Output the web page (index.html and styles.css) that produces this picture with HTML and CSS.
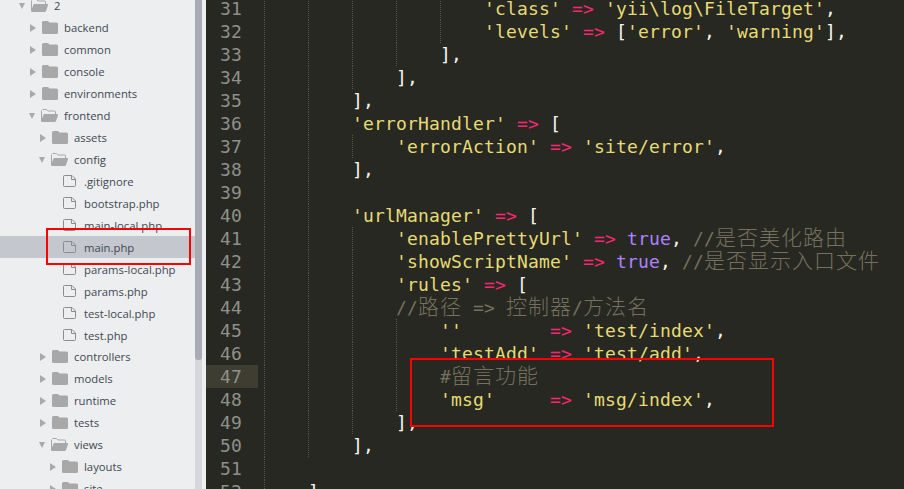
FILE: index.html
```html
<!DOCTYPE html>
<html lang="zh">
<head>
<meta charset="utf-8">
<title>main.php</title>
<link rel="stylesheet" href="styles.css">
</head>
<body>
<svg class="defs" width="0" height="0" aria-hidden="true">
  <symbol id="closed" viewBox="0 0 16 13"><path d="M1.500 0H6l1.500 1.500h7A1.500 1.500 0 0 1 16 3v8.500A1.500 1.500 0 0 1 14.500 13h-13A1.500 1.500 0 0 1 0 11.500v-10A1.500 1.500 0 0 1 1.500 0z" fill="#a8a8a8"/></symbol>
  <symbol id="open" viewBox="0 0 17 13"><path d="M1.500.5H5.500L7 2h6.500a1 1 0 0 1 1 1v2" fill="none" stroke="#a8a8a8"/><path d="M.5 12V1.500" stroke="#a8a8a8" fill="none"/><path d="M3.500 5H16a1 1 0 0 1 1 1.300l-2 5.700a1.500 1.500 0 0 1-1.400 1H1.200a1 1 0 0 1-.9-1.400l2-5.500A1.500 1.500 0 0 1 3.500 5z" fill="#a8a8a8"/></symbol>
  <symbol id="file" viewBox="0 0 13 12"><path d="M.5 1.500a1 1 0 0 1 1-1H9L12.500 4v6.500a1 1 0 0 1-1 1h-10a1 1 0 0 1-1-1z" fill="none" stroke="#8c8c8c"/><path d="M8.500.5V4.500H12.500" fill="none" stroke="#8c8c8c"/></symbol>
</svg>
<div class="window">
  <aside class="sidebar">
    <ul class="tree">
      <li class="node d0"><i class="arrow down"></i><svg class="ico open"><use href="#open"/></svg><span>2</span></li>
      <li class="node d1"><i class="arrow"></i><svg class="ico folder"><use href="#closed"/></svg><span>backend</span></li>
      <li class="node d1"><i class="arrow"></i><svg class="ico folder"><use href="#closed"/></svg><span>common</span></li>
      <li class="node d1"><i class="arrow"></i><svg class="ico folder"><use href="#closed"/></svg><span>console</span></li>
      <li class="node d1"><i class="arrow"></i><svg class="ico folder"><use href="#closed"/></svg><span>environments</span></li>
      <li class="node d1"><i class="arrow down"></i><svg class="ico open"><use href="#open"/></svg><span>frontend</span></li>
      <li class="node d2"><i class="arrow"></i><svg class="ico folder"><use href="#closed"/></svg><span>assets</span></li>
      <li class="node d2"><i class="arrow down"></i><svg class="ico open"><use href="#open"/></svg><span>config</span></li>
      <li class="node f3"><svg class="ico doc"><use href="#file"/></svg><span>.gitignore</span></li>
      <li class="node f3"><svg class="ico doc"><use href="#file"/></svg><span>bootstrap.php</span></li>
      <li class="node f3"><svg class="ico doc"><use href="#file"/></svg><span>main-local.php</span></li>
      <li class="node f3 selected"><svg class="ico doc"><use href="#file"/></svg><span>main.php</span></li>
      <li class="node f3"><svg class="ico doc"><use href="#file"/></svg><span>params-local.php</span></li>
      <li class="node f3"><svg class="ico doc"><use href="#file"/></svg><span>params.php</span></li>
      <li class="node f3"><svg class="ico doc"><use href="#file"/></svg><span>test-local.php</span></li>
      <li class="node f3"><svg class="ico doc"><use href="#file"/></svg><span>test.php</span></li>
      <li class="node d2"><i class="arrow"></i><svg class="ico folder"><use href="#closed"/></svg><span>controllers</span></li>
      <li class="node d2"><i class="arrow"></i><svg class="ico folder"><use href="#closed"/></svg><span>models</span></li>
      <li class="node d2"><i class="arrow"></i><svg class="ico folder"><use href="#closed"/></svg><span>runtime</span></li>
      <li class="node d2"><i class="arrow"></i><svg class="ico folder"><use href="#closed"/></svg><span>tests</span></li>
      <li class="node d2"><i class="arrow down"></i><svg class="ico open"><use href="#open"/></svg><span>views</span></li>
      <li class="node d3"><i class="arrow"></i><svg class="ico folder"><use href="#closed"/></svg><span>layouts</span></li>
      <li class="node d3"><i class="arrow"></i><svg class="ico folder"><use href="#closed"/></svg><span>site</span></li>
    </ul>
  </aside>
  <div class="scrollbar"><div class="thumb"></div></div>
  <main class="editor">
    <div class="row"><span class="num">31</span><code class="code"><i></i><i></i><i></i><i></i><i></i><b class="s">'class'</b> <b class="k">=&gt;</b> <b class="s">'yii\log\FileTarget'</b>,</code></div>
    <div class="row"><span class="num">32</span><code class="code"><i></i><i></i><i></i><i></i><i></i><b class="s">'levels'</b> <b class="k">=&gt;</b> [<b class="s">'error'</b>, <b class="s">'warning'</b>],</code></div>
    <div class="row"><span class="num">33</span><code class="code"><i></i><i></i><i></i><i></i>],</code></div>
    <div class="row"><span class="num">34</span><code class="code"><i></i><i></i><i></i>],</code></div>
    <div class="row"><span class="num">35</span><code class="code"><i></i><i></i>],</code></div>
    <div class="row"><span class="num">36</span><code class="code"><i></i><i></i><b class="s">'errorHandler'</b> <b class="k">=&gt;</b> [</code></div>
    <div class="row"><span class="num">37</span><code class="code"><i></i><i></i><i></i><b class="s">'errorAction'</b> <b class="k">=&gt;</b> <b class="s">'site/error'</b>,</code></div>
    <div class="row"><span class="num">38</span><code class="code"><i></i><i></i>],</code></div>
    <div class="row"><span class="num">39</span><code class="code"><i></i><i></i></code></div>
    <div class="row"><span class="num">40</span><code class="code"><i></i><i></i><b class="s">'urlManager'</b> <b class="k">=&gt;</b> [</code></div>
    <div class="row"><span class="num">41</span><code class="code"><i></i><i></i><i></i><b class="s">'enablePrettyUrl'</b> <b class="k">=&gt;</b> <b class="t">true</b>, <b class="c">//<span class="cjk">是否美化路由</span></b></code></div>
    <div class="row"><span class="num">42</span><code class="code"><i></i><i></i><i></i><b class="s">'showScriptName'</b> <b class="k">=&gt;</b> <b class="t">true</b>, <b class="c">//<span class="cjk">是否显示入口文件</span></b></code></div>
    <div class="row"><span class="num">43</span><code class="code"><i></i><i></i><i></i><b class="s">'rules'</b> <b class="k">=&gt;</b> [</code></div>
    <div class="row"><span class="num">44</span><code class="code"><i></i><i></i><i></i><b class="c">//<span class="cjk">路径</span> =&gt; <span class="cjk">控制器</span>/<span class="cjk">方法名</span></b></code></div>
    <div class="row"><span class="num">45</span><code class="code"><i></i><i></i><i></i><i></i><b class="s">''</b>        <b class="k">=&gt;</b> <b class="s">'test/index'</b>,</code></div>
    <div class="row"><span class="num">46</span><code class="code"><i></i><i></i><i></i><i></i><b class="s">'testAdd'</b> <b class="k">=&gt;</b> <b class="s">'test/add'</b>,</code></div>
    <div class="row"><span class="num active">47</span><code class="code"><i></i><i></i><i></i><i></i><b class="c">#<span class="cjk">留言功能</span></b></code></div>
    <div class="row"><span class="num">48</span><code class="code"><i></i><i></i><i></i><i></i><b class="s">'msg'</b>     <b class="k">=&gt;</b> <b class="s">'msg/index'</b>,</code></div>
    <div class="row"><span class="num">49</span><code class="code"><i></i><i></i><i></i>],</code></div>
    <div class="row"><span class="num">50</span><code class="code"><i></i><i></i>],</code></div>
    <div class="row"><span class="num">51</span><code class="code"><i></i></code></div>
    <div class="row"><span class="num">52</span><code class="code"><i></i>]</code></div>
  </main>
</div>
<div class="mark mark-file"></div>
<div class="mark mark-code"></div>
</body>
</html>
```
FILE: styles.css
```css
* { box-sizing: border-box; }
html, body { margin: 0; height: 100%; overflow: hidden; background: #272822; }
.defs { position: absolute; }
.window { display: flex; width: 904px; height: 489px; overflow: hidden; }

.sidebar { width: 195px; flex: none; background: #eceef0; overflow: hidden; }
.tree { list-style: none; margin: -5px 0 0; padding: 0; }
.node {
  display: flex; align-items: center; height: 21.95px;
  font: 11.300px/22px "Open Sans", sans-serif; color: #3f4852; white-space: nowrap;
}
.node span { padding-top: 1px; }
.node.selected { background: #c4c7ce; }
.d0 { padding-left: 20px; }
.d1 { padding-left: 30px; }
.d2 { padding-left: 40px; }
.d3 { padding-left: 50px; }
.f3 { padding-left: 63px; }
.arrow {
  flex: none; width: 0; height: 0; margin-right: 6px;
  border-left: 6px solid #a9a9a9; border-top: 4.500px solid transparent; border-bottom: 4.500px solid transparent;
}
.arrow.down {
  margin-left: -1px; margin-right: 6px;
  border-left: 3.500px solid transparent; border-right: 3.500px solid transparent;
  border-top: 6px solid #a9a9a9; border-bottom: 0;
}
.ico { flex: none; }
.folder { width: 16px; height: 13px; margin-right: 6px; }
.open { width: 17px; height: 13px; margin-right: 6px; }
.doc { width: 13px; height: 12px; margin-right: 8px; }

.scrollbar { width: 7px; flex: none; background: #d5d7da; }
.thumb { height: 360px; background: #a8abb3; border-radius: 0 0 3px 3px; }

.editor { flex: 1; border-left: 4px solid #eceef0; background: #272822; overflow: hidden; }
.row { display: flex; height: 23px; position: relative; top: -3px; }
.num {
  flex: none; width: 52px; padding-right: 16px; text-align: right;
  font: 18px/23px "DejaVu Sans Mono", monospace; letter-spacing: .16px; color: #8f908a;
}
.num.active { background: #3e3d32; }
.code {
  flex: 1; margin-left: 6px; white-space: pre; color: #f8f8f2;
  font: 18px/23px "DejaVu Sans Mono", "Noto Sans CJK SC", monospace; letter-spacing: .16px;
}
.code i { display: inline-block; width: 44px; height: 23px; vertical-align: top; border-left: 1px dotted #55554c; }
.code b { font-weight: normal; }
.s { color: #e6db74; }
.k { color: #f92672; }
.t { color: #ae81ff; }
.c { color: #75715e; }
.cjk { font: 300 21px/0 "Noto Sans CJK SC", sans-serif; letter-spacing: 1px; }

.mark { position: absolute; border: 2px solid #f00; }
.mark-file { left: 46px; top: 228px; width: 145px; height: 37px; }
.mark-code { left: 410px; top: 358px; width: 364px; height: 69px; }
```
